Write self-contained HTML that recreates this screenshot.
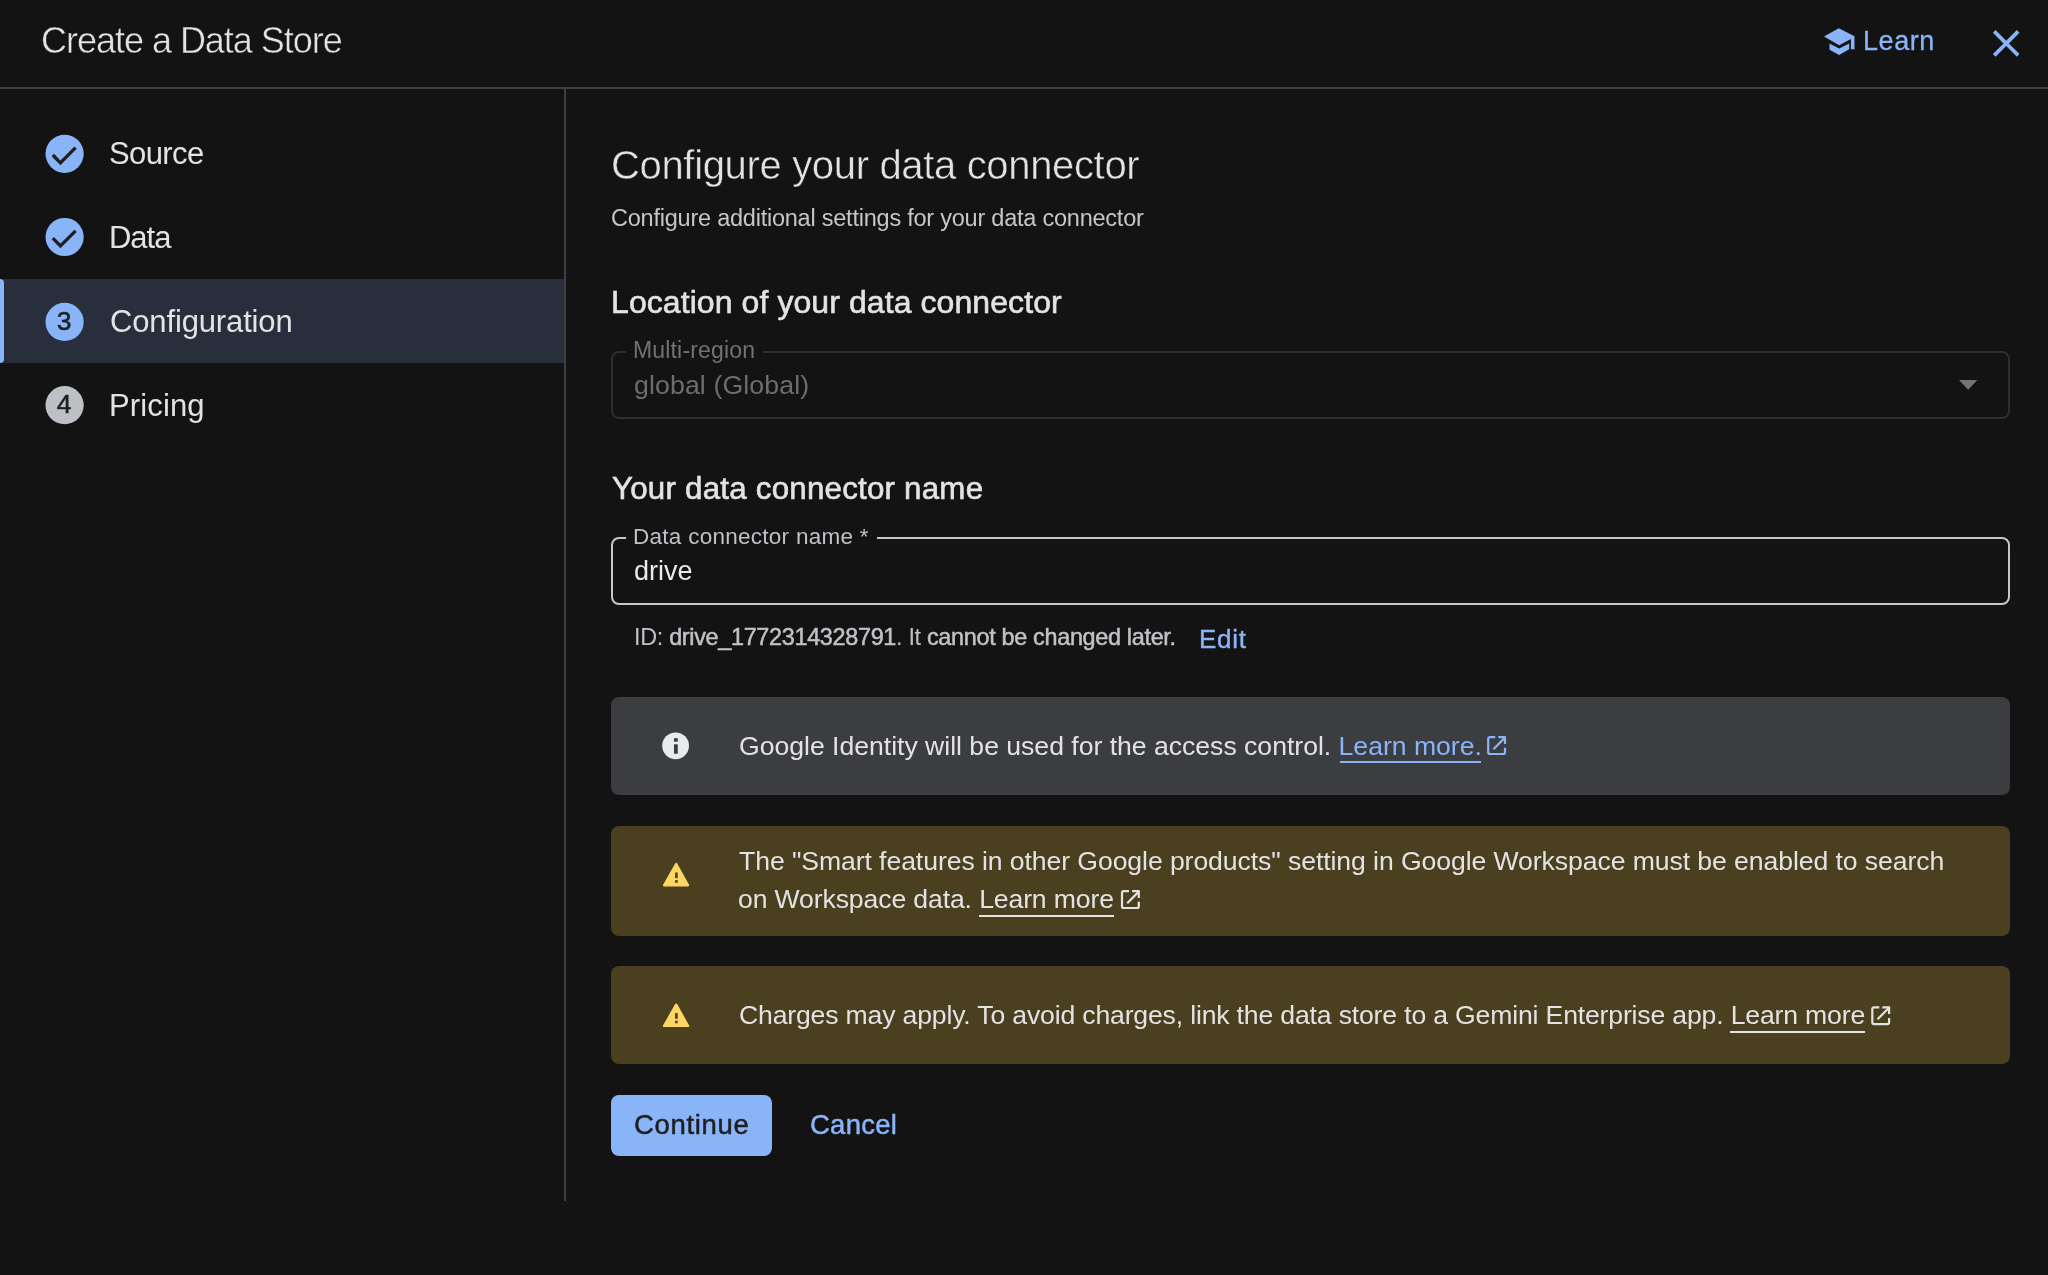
<!DOCTYPE html>
<html><head><meta charset='utf-8'><title>Create a Data Store</title>
<style>
html,body{margin:0;padding:0;}
body{width:2048px;height:1275px;background:#131314;overflow:hidden;position:relative;font-family:"Liberation Sans",sans-serif;}
.a{position:absolute;}
.t{position:absolute;white-space:nowrap;line-height:1;will-change:transform;font-family:"Liberation Sans",sans-serif;}
.lb{color:#8ab4f8;text-decoration:none}
.lw{color:inherit;text-decoration:none}
b{font-weight:400;-webkit-text-stroke:0.5px currentColor}
.ov{position:absolute;left:0;top:0;}
.num{position:absolute;width:40px;text-align:center;font-size:26.5px;line-height:1;color:#1f1f1f;-webkit-text-stroke:0.5px #1f1f1f;will-change:transform;font-family:"Liberation Sans",sans-serif;}
</style></head><body>
<div class='a' style='left:0;top:87px;width:2048px;height:2px;background:#3c4043'></div>
<div class='a' style='left:564px;top:89px;width:2px;height:1112px;background:#3c4043'></div>
<div class='a' style='left:0;top:279px;width:564px;height:84px;background:#282e3b'></div>
<div class='a' style='left:0;top:279px;width:4px;height:84px;background:#8ab4f8;border-radius:0 4px 4px 0'></div>
<div class='a' style='left:611px;top:351px;width:1395px;height:64px;border:2px solid #2e2f31;border-radius:8px'></div>
<div class='a' style='left:626px;top:348px;width:137px;height:8px;background:#131314'></div>
<div class='a' style='left:611px;top:537px;width:1395px;height:64px;border:2px solid #c7c7c9;border-radius:8px'></div>
<div class='a' style='left:626px;top:534px;width:251px;height:8px;background:#131314'></div>
<div class='a' style='left:611px;top:697px;width:1399px;height:98px;background:#3c3d41;border-radius:8px'></div>
<div class='a' style='left:611px;top:826px;width:1399px;height:110px;background:#4a3f1e;border-radius:8px'></div>
<div class='a' style='left:611px;top:966px;width:1399px;height:98px;background:#4a3f1e;border-radius:8px'></div>
<div class='a' style='left:611px;top:1095px;width:161px;height:61px;background:#8ab4f8;border-radius:8px'></div>
<div class='a' style='left:1339.8px;top:761px;width:141px;height:2.4px;background:#8ab4f8'></div>
<div class='a' style='left:979.3px;top:914.8px;width:135px;height:2.4px;background:#e3e3e3'></div>
<div class='a' style='left:1730.1px;top:1030.6px;width:135px;height:2.4px;background:#e3e3e3'></div>
<svg class='ov' width='2048' height='1275' viewBox='0 0 2048 1275'>
<!-- school icon -->
<path fill='#8ab4f8' d='M1824 36.4 L1838.8 28.3 L1854.5 36.2 L1854.5 49.3 L1850.9 49.3 L1850.9 39 L1839.2 45.2 Z'/>
<path fill='#8ab4f8' d='M1829.5 43.5 L1839.2 48.5 L1849.2 43.5 L1849.2 49.3 L1839.2 54.9 L1829.5 49.7 Z'/>
<!-- close -->
<path transform='translate(1983.4,20.6) scale(1.9)' fill='#8ab4f8' d='M19 6.41L17.59 5 12 10.59 6.41 5 5 6.41 10.59 12 5 17.59 6.41 19 12 13.41 17.59 19 19 17.59 13.41 12z'/>
<circle cx='64.6' cy='153.8' r='19.1' fill='#8ab4f8'/><polyline points='52.8,155.0 60.4,162.8 75.6,147.6' fill='none' stroke='#1f1f1f' stroke-width='3.3' stroke-linecap='butt' stroke-linejoin='miter'/>
<circle cx='64.6' cy='237' r='19.1' fill='#8ab4f8'/><polyline points='52.8,238.2 60.4,246.0 75.6,230.8' fill='none' stroke='#1f1f1f' stroke-width='3.3' stroke-linecap='butt' stroke-linejoin='miter'/>
<circle cx='64.6' cy='321.9' r='19.1' fill='#8ab4f8'/>
<circle cx='64.6' cy='405.2' r='19.1' fill='#bdc1c6'/>
<!-- dropdown arrow -->
<path d='M1959 380 L1977.3 380 L1968.15 389.8 Z' fill='#737477'/>
<!-- info icon -->
<circle cx='675.6' cy='745.8' r='13.4' fill='#e8eaed'/>
<rect x='674' y='738.2' width='3.8' height='3.5' fill='#3c3d41'/>
<rect x='674' y='744.3' width='3.8' height='9.4' fill='#3c3d41'/>
<path d='M676.2 864.1 L688.0 885.3 L664.1 885.3 Z' fill='#fdd663' stroke='#fdd663' stroke-width='2.4' stroke-linejoin='round'/><rect x='675.1' y='872.5' width='2.6' height='5.7' fill='#4a3f1e'/><rect x='675.1' y='880.1' width='2.6' height='2.6' fill='#4a3f1e'/>
<path d='M676.2 1004.7 L688.0 1025.8999999999999 L664.1 1025.8999999999999 Z' fill='#fdd663' stroke='#fdd663' stroke-width='2.4' stroke-linejoin='round'/><rect x='675.1' y='1013.1' width='2.6' height='5.7' fill='#4a3f1e'/><rect x='675.1' y='1020.7' width='2.6' height='2.6' fill='#4a3f1e'/>
<g transform='translate(0.00,0.00)' fill='none' stroke='#8ab4f8' stroke-width='2.2' stroke-linecap='butt'><path d='M1495.2 737.2 H1490 Q1488.2 737.2 1488.2 739 V752.2 Q1488.2 754 1490 754 H1503.2 Q1505 754 1505 752.2 V747.8'/><path d='M1498.3 737.2 H1505 V743.9' stroke-linejoin='round'/><path d='M1493.4 749.2 L1504.2 738.4'/></g>
<g transform='translate(-366.20,154.00)' fill='none' stroke='#e3e3e3' stroke-width='2.2' stroke-linecap='butt'><path d='M1495.2 737.2 H1490 Q1488.2 737.2 1488.2 739 V752.2 Q1488.2 754 1490 754 H1503.2 Q1505 754 1505 752.2 V747.8'/><path d='M1498.3 737.2 H1505 V743.9' stroke-linejoin='round'/><path d='M1493.4 749.2 L1504.2 738.4'/></g>
<g transform='translate(384.10,270.10)' fill='none' stroke='#e3e3e3' stroke-width='2.2' stroke-linecap='butt'><path d='M1495.2 737.2 H1490 Q1488.2 737.2 1488.2 739 V752.2 Q1488.2 754 1490 754 H1503.2 Q1505 754 1505 752.2 V747.8'/><path d='M1498.3 737.2 H1505 V743.9' stroke-linejoin='round'/><path d='M1493.4 749.2 L1504.2 738.4'/></g>
</svg>
<div class='num' style='left:43.8px;top:307.5px'>3</div>
<div class='num' style='left:44px;top:390.7px'>4</div>
<div class='t' id='title' style='left:40.8px;top:23.4px;font-size:36px;letter-spacing:-1.022px;color:#e3e3e3;-webkit-text-stroke:0.5px #131314'>Create a Data Store</div><div class='t' id='learn' style='left:1863.0px;top:28.4px;font-size:27px;letter-spacing:0.55px;color:#8ab4f8;-webkit-text-stroke:0.3px #8ab4f8'>Learn</div><div class='t' id='s1' style='left:109.1px;top:138.3px;font-size:31px;letter-spacing:-0.6px;color:#e3e3e3'>Source</div><div class='t' id='s2' style='left:109.3px;top:221.5px;font-size:31px;letter-spacing:-1.033px;color:#e3e3e3'>Data</div><div class='t' id='s3' style='left:110.2px;top:306.4px;font-size:31px;letter-spacing:-0.142px;color:#e3e3e3'>Configuration</div><div class='t' id='s4' style='left:109.3px;top:389.7px;font-size:31px;letter-spacing:0.133px;color:#e3e3e3'>Pricing</div><div class='t' id='h1' style='left:610.7px;top:144.7px;font-size:40px;letter-spacing:-0.339px;color:#e3e3e3;-webkit-text-stroke:0.5px #131314'>Configure your data connector</div><div class='t' id='sub' style='left:611.1px;top:207.3px;font-size:23.5px;letter-spacing:-0.229px;color:#c4c7c5'>Configure additional settings for your data connector</div><div class='t' id='loc' style='left:610.9px;top:285.9px;font-size:32px;letter-spacing:0.08px;color:#e3e3e3;-webkit-text-stroke:0.6px #e3e3e3'>Location of your data connector</div><div class='t' id='multi' style='left:633.2px;top:338.7px;font-size:23px;letter-spacing:0.164px;color:#6f7276'>Multi-region</div><div class='t' id='glob' style='left:634.2px;top:371.8px;font-size:26.7px;letter-spacing:0.107px;color:#6c6d70'>global (Global)</div><div class='t' id='yname' style='left:612.1px;top:472.5px;font-size:31.3px;letter-spacing:0.222px;color:#e3e3e3;-webkit-text-stroke:0.6px #e3e3e3'>Your data connector name</div><div class='t' id='dcn' style='left:633.2px;top:525.6px;font-size:22.5px;letter-spacing:0.27px;color:#bfc2c6'>Data connector name *</div><div class='t' id='drive' style='left:634.2px;top:557.5px;font-size:27px;letter-spacing:-0.025px;color:#e8eaed'>drive</div><div class='t' id='id' style='left:633.5px;top:626.3px;font-size:23.4px;letter-spacing:-0.312px;color:#bfc2c6'>ID: <b>drive_1772314328791</b>. It <b>cannot be changed later.</b></div><div class='t' id='edit' style='left:1198.6px;top:626.0px;font-size:26px;letter-spacing:0.733px;color:#8ab4f8;-webkit-text-stroke:0.4px #8ab4f8'>Edit</div><div class='t' id='info' style='left:738.5px;top:732.6px;font-size:26.6px;letter-spacing:-0.011px;color:#e3e3e3'>Google Identity will be used for the access control. <a class='lb'>Learn more.</a></div><div class='t' id='w1a' style='left:739.3px;top:848.2px;font-size:26.6px;letter-spacing:-0.077px;color:#e3e3e3'>The "Smart features in other Google products" setting in Google Workspace must be enabled to search</div><div class='t' id='w1b' style='left:737.9px;top:885.8px;font-size:26.6px;letter-spacing:-0.121px;color:#e3e3e3'>on Workspace data. <a class='lw'>Learn more</a></div><div class='t' id='w2' style='left:738.8px;top:1001.8px;font-size:26.6px;letter-spacing:-0.165px;color:#e3e3e3'>Charges may apply. To avoid charges, link the data store to a Gemini Enterprise app. <a class='lw'>Learn more</a></div><div class='t' id='cont' style='left:634.2px;top:1111.2px;font-size:27.5px;letter-spacing:0.671px;color:#1f1f1f;-webkit-text-stroke:0.5px #1f1f1f'>Continue</div><div class='t' id='cancel' style='left:809.9px;top:1111.2px;font-size:27.5px;letter-spacing:0.24px;color:#8ab4f8;-webkit-text-stroke:0.5px #8ab4f8'>Cancel</div>
</body></html>
